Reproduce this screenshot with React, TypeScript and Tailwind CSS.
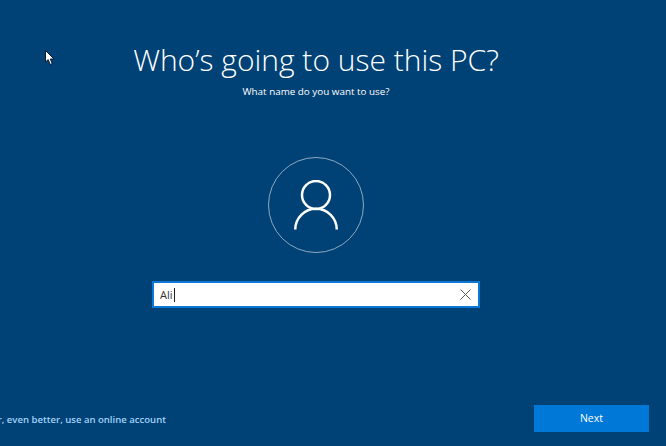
function Cursor() {
  return (
    <svg className="absolute left-[45px] top-[50px]" width="11" height="16" viewBox="0 0 11 16">
      <path d="M0.5 0.5 L0.5 12 L3.2 9.6 L5.2 14.5 L7.2 13.6 L5.3 9 L9 9 Z" fill="#fff" stroke="#0b1a33" strokeWidth="1" />
    </svg>
  );
}

function UserIcon() {
  return (
    <svg width="44" height="50" viewBox="0 0 44 50" fill="none" stroke="#fff" strokeWidth="2.5">
      <circle cx="22" cy="15" r="14" />
      <path d="M1.25 49.5 A20.75 20.75 0 0 1 42.75 49.5" />
    </svg>
  );
}

function ClearIcon() {
  return (
    <svg width="11" height="11" viewBox="0 0 11 11" stroke="#5a5a5a" strokeWidth="1">
      <path d="M0.5 0.5 L10.5 10.5 M10.5 0.5 L0.5 10.5" />
    </svg>
  );
}

export default function App() {
  return (
    <div className="relative flex h-[446px] w-[666px] flex-col overflow-hidden bg-[#004275] font-['Open_Sans','Liberation_Sans',sans-serif] text-white">
      <Cursor />

      {/* Main content */}
      <div className="flex w-[632px] flex-1 flex-col items-center pt-[38px]">
        <h1 className="text-[30px] leading-[44px] font-light whitespace-nowrap">Who’s going to use this PC?</h1>
        <p className="mt-[2px] text-[9.85px] leading-[14px]">What name do you want to use?</p>

        <div className="mt-[59px] flex h-[96px] w-[96px] items-center justify-center rounded-full border border-[#8fa9c0]">
          <UserIcon />
        </div>

        <div className="mt-[28px] flex h-[27px] w-[328px] items-center justify-between border-2 border-[#0a78d7] bg-white pr-[7px] pl-[6px]">
          <span className="flex items-center text-[11px] leading-[14px] text-[#333]">
            Ali
            <span className="ml-[1px] h-[14px] w-[1px] bg-[#222]" />
          </span>
          <ClearIcon />
        </div>
      </div>

      {/* Footer */}
      <div className="flex items-center justify-between pr-[17px] pb-[14px]">
        <div className="flex w-[166px] justify-end overflow-hidden pt-[4px]">
          <a className="text-[9.55px] font-semibold whitespace-nowrap text-[#a3d3fa]">Or, even better, use an online account</a>
        </div>
        <button className="h-[27px] w-[115px] bg-[#0078d7] text-[10.5px]">Next</button>
      </div>
    </div>
  );
}
